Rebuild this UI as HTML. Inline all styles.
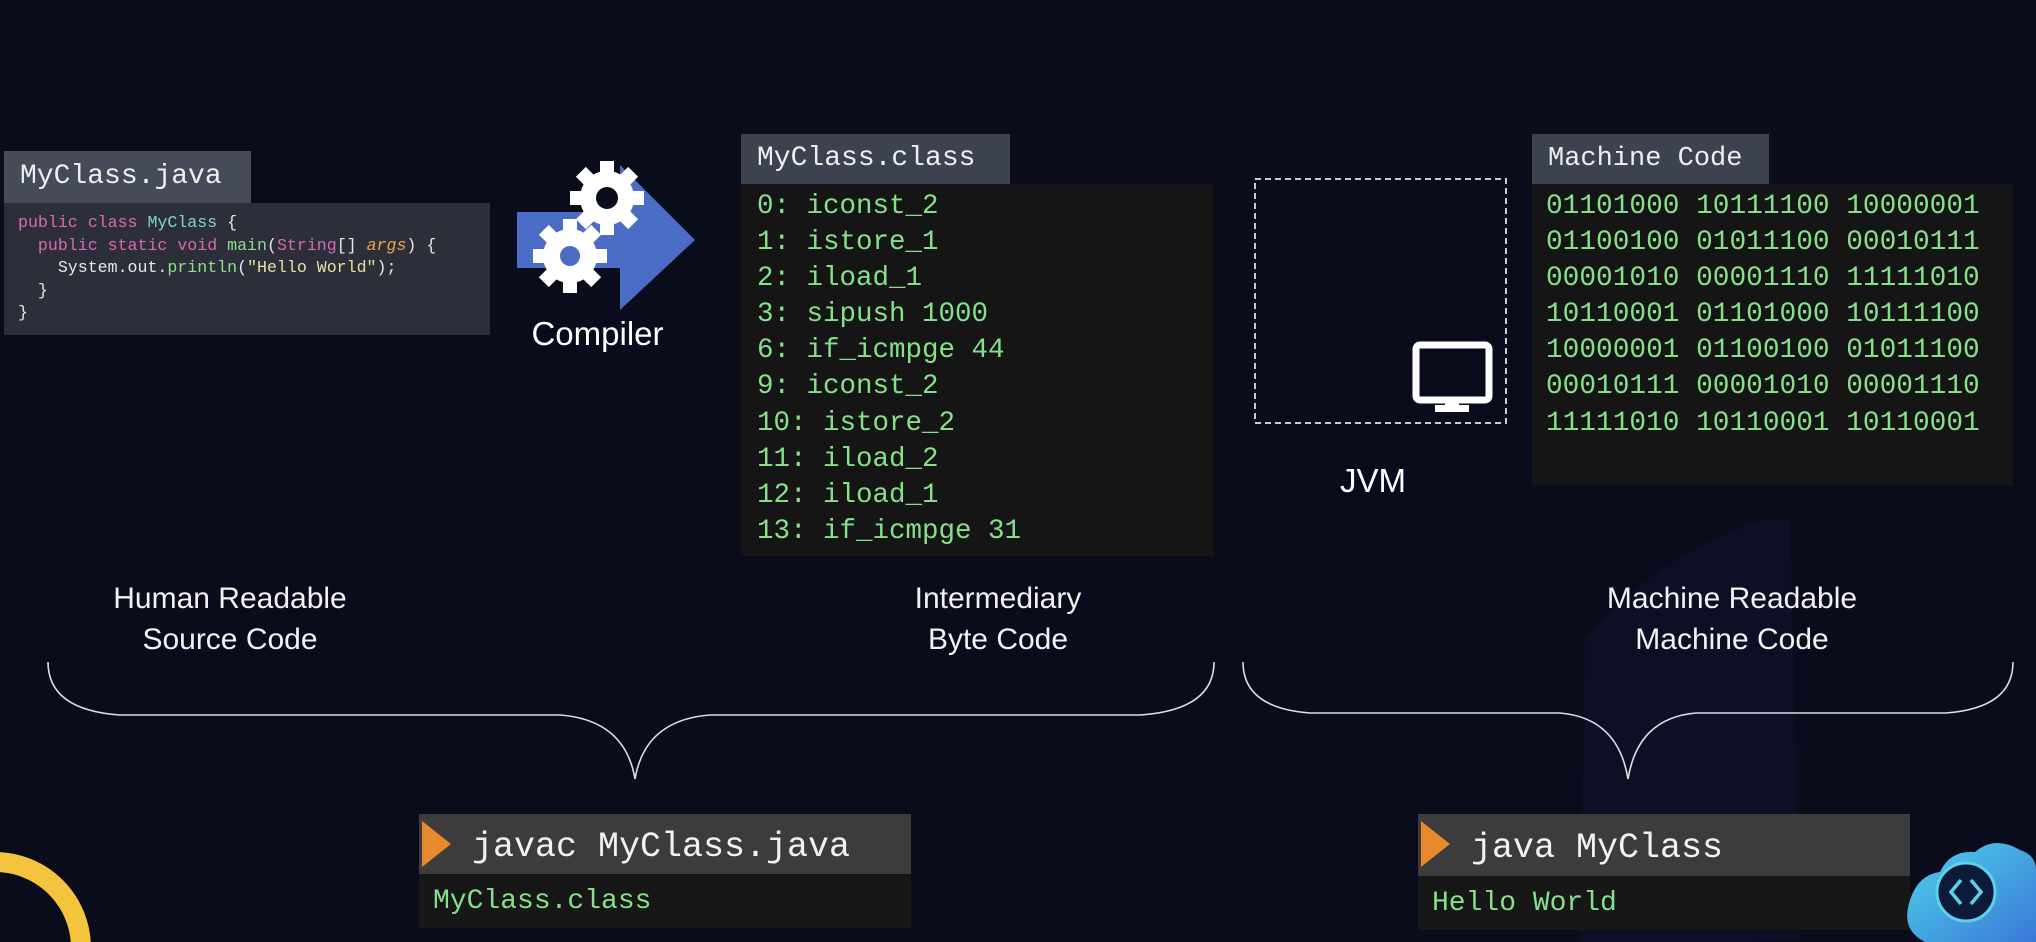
<!DOCTYPE html>
<html><head><meta charset="utf-8"><style>
*{margin:0;padding:0;box-sizing:border-box}
html,body{width:2036px;height:942px;overflow:hidden}
body{background:#0a0b1b;position:relative;font-family:"Liberation Sans",sans-serif;color:#fff}
.a{position:absolute}
.mono{font-family:"Liberation Mono",monospace}
.hdr{background:#3d4250;color:#eee;font-size:28px;line-height:50px;padding-left:16px}
.g{color:#86e08a}
.lbl{font-size:30px;text-align:center;line-height:41px;color:#f2f2f2}
</style></head><body>
<svg class="a" style="left:0;top:0" width="2036" height="942">
<path d="M1750 942 L1580 942 L1585 640 Q1650 560 1760 520 L1790 520 L1800 940 Z" fill="#0f1230" opacity="0.6"/>
<circle cx="-5" cy="948" r="86" fill="none" stroke="#f5c43f" stroke-width="20"/>
<path d="M48 662 Q48 710 120 715 L560 715 Q625 720 635 779 Q645 720 710 715 L1140 715 Q1214 710 1214 662" fill="none" stroke="#ddd" stroke-width="1.6"/>
<path d="M1243 662 Q1243 708 1310 713 L1560 713 Q1618 718 1628 779 Q1638 718 1696 713 L1946 713 Q2013 708 2013 662" fill="none" stroke="#ddd" stroke-width="1.6"/>
<path d="M517 212 L620 212 L620 165 L695 240 L620 310 L620 268 L517 268 Z" fill="#4a6cc4"/>
<g fill="#fff">
<g transform="translate(607,198)"><circle r="27"/><g id="t"><rect x="-7" y="-37" width="14" height="14"/><rect x="-7" y="23" width="14" height="14"/><rect x="-37" y="-7" width="14" height="14"/><rect x="23" y="-7" width="14" height="14"/></g><use href="#t" transform="rotate(45)"/><circle r="11" fill="#0a0b1b"/></g>
<g transform="translate(570,256)"><circle r="27"/><use href="#t"/><use href="#t" transform="rotate(45)"/><circle r="10" fill="#4a6cc4"/></g>
</g>
<rect x="1255" y="179" width="251" height="244" fill="none" stroke="#ccc" stroke-width="2" stroke-dasharray="6 4"/>
<rect x="1416" y="345" width="73" height="55" rx="4" fill="none" stroke="#fff" stroke-width="7"/>
<rect x="1445" y="400" width="14" height="10" fill="#fff"/><rect x="1435" y="405" width="34" height="7" fill="#fff"/>
</svg>

<div class="a hdr mono" style="left:4px;top:151px;width:247px;height:52px;line-height:52px;background:#464b59">MyClass.java</div>
<div class="a mono" style="left:4px;top:203px;width:486px;height:132px;background:#2c2f3a;font-size:16.6px;line-height:22.6px;padding:9px 0 0 14px;color:#e8e8e8;white-space:pre"><span style="color:#d86ab5">public class</span> <span style="color:#7fd8c8">MyClass</span> {
  <span style="color:#d86ab5">public static void</span> <span style="color:#8fe08a">main</span>(<span style="color:#d86ab5">String</span>[] <i style="color:#e8a850">args</i>) {
    System.out.<span style="color:#8fe08a">println</span>(<span style="color:#e8e0a0">"Hello World"</span>);
  }
}</div>
<div class="a" style="left:500px;top:315px;width:195px;text-align:center;font-size:33px">Compiler</div>

<div class="a hdr mono" style="left:741px;top:134px;width:269px;height:50px">MyClass.class</div>
<div class="a mono g" style="left:741px;top:184px;width:473px;height:372px;background:#151515;font-size:27.5px;line-height:36.1px;padding:5px 0 0 16px;white-space:pre">0: iconst_2
1: istore_1
2: iload_1
3: sipush 1000
6: if_icmpge 44
9: iconst_2
10: istore_2
11: iload_2
12: iload_1
13: if_icmpge 31</div>

<div class="a" style="left:1340px;top:462px;font-size:33px">JVM</div>

<div class="a hdr mono" style="left:1532px;top:134px;width:237px;height:50px;font-size:27px">Machine Code</div>
<div class="a mono g" style="left:1532px;top:184px;width:481px;height:302px;background:#151515;font-size:27.8px;line-height:36.1px;padding:5px 0 0 14px;white-space:pre">01101000 10111100 10000001
01100100 01011100 00010111
00001010 00001110 11111010
10110001 01101000 10111100
10000001 01100100 01011100
00010111 00001010 00001110
11111010 10110001 10110001</div>

<div class="a lbl" style="left:80px;top:578px;width:300px">Human Readable<br>Source Code</div>
<div class="a lbl" style="left:848px;top:578px;width:300px">Intermediary<br>Byte Code</div>
<div class="a lbl" style="left:1582px;top:578px;width:300px">Machine Readable<br>Machine Code</div>

<div class="a" style="left:419px;top:814px;width:492px;height:60px;background:#3c3c3c"></div>
<div class="a mono" style="left:472px;top:827px;font-size:35px;color:#f2f2f2">javac MyClass.java</div>
<div class="a mono g" style="left:419px;top:874px;width:492px;height:54px;background:#171717;font-size:28px;padding:12px 0 0 14px">MyClass.class</div>

<div class="a" style="left:1418px;top:814px;width:492px;height:62px;background:#3c3c3c"></div>
<div class="a mono" style="left:1471px;top:828px;font-size:35px;color:#f2f2f2">java MyClass</div>
<div class="a mono g" style="left:1418px;top:876px;width:492px;height:54px;background:#171717;font-size:28px;padding:12px 0 0 14px">Hello World</div>

<svg class="a" style="left:0;top:0" width="2036" height="942">
<path d="M422 821 L451 844 L422 867 Z" fill="#e8892d"/>
<path d="M1421 821 L1450 844 L1421 867 Z" fill="#e8892d"/>
<defs><linearGradient id="cg" x1="0" y1="0" x2="1" y2="1"><stop offset="0" stop-color="#4fd3e8"/><stop offset="1" stop-color="#3a78d8"/></linearGradient></defs>
<path d="M1925 942 Q1900 930 1910 900 Q1918 875 1940 872 Q1950 850 1975 852 Q1995 835 2020 850 Q2036 855 2036 870 L2036 942 Z" fill="url(#cg)"/>
<circle cx="1966" cy="892" r="29" fill="#0d1a3a" stroke="#5fd0ea" stroke-width="3"/>
<path d="M1961 880 L1951 892 L1961 904 M1971 880 L1981 892 L1971 904" fill="none" stroke="#5fd0ea" stroke-width="3.5"/>
</svg>
</body></html>
